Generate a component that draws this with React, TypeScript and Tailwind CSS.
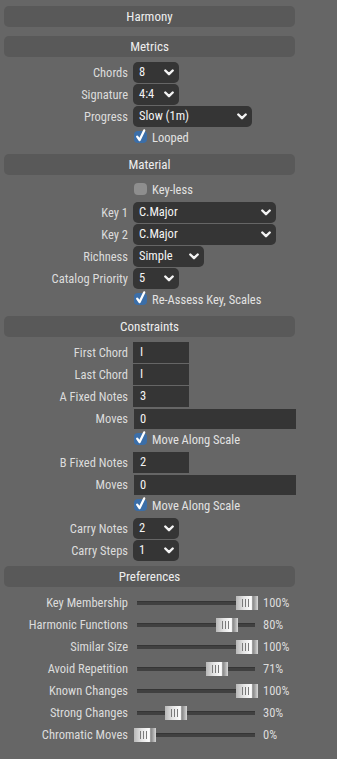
import React from "react";

const font = "font-['Roboto_Condensed',Roboto,sans-serif]";

function Header({ title }: { title: string }) {
  return (
    <div className="h-[21px] rounded-[5px] bg-[#595959] flex items-center justify-center text-[13px] text-[#eeeeee]">
      {title}
    </div>
  );
}

function Chevron() {
  return (
    <svg width="10" height="7" viewBox="0 0 10 7" className="shrink-0">
      <polyline points="1.3,1.5 5,5.2 8.7,1.5" fill="none" stroke="#f4f4f4" strokeWidth="2.4" strokeLinecap="round" strokeLinejoin="round" />
    </svg>
  );
}

function Select({ value, w }: { value: string; w: string }) {
  return (
    <div className={`${w} h-[21px] rounded-[5px] bg-[#353535] flex items-center justify-between pl-[6px] pr-[5px] text-[#f4f4f4]`}>
      <span>{value}</span>
      <Chevron />
    </div>
  );
}

function Input({ value, wide }: { value: string; wide?: boolean }) {
  return wide ? (
    <div className="w-[162px] h-[20px] mt-[1px] ml-[1px] bg-[#353535] flex items-center pl-[6px] text-[#f4f4f4]">{value}</div>
  ) : (
    <div className="w-[56px] h-[21px] bg-[#353535] flex items-center pl-[7px] text-[#f4f4f4]">{value}</div>
  );
}

function Row({ label, children }: { label: string; children: React.ReactNode }) {
  return (
    <div className="flex h-[22px] items-start">
      <div className="w-[124px] shrink-0 text-right pr-0 h-[21px] leading-[21px] text-[#dcdcdc]">{label}</div>
      <div className="ml-[5px]">{children}</div>
    </div>
  );
}

function Check({ label, checked }: { label: string; checked: boolean }) {
  return (
    <div className="flex h-[22px] items-start pl-[130px] pt-[3px]">
      {checked ? (
        <div className="relative w-[13px] h-[12px] rounded-[4px] bg-[#3b6ea8]">
          <svg width="13" height="14" viewBox="0 0 13 14" className="absolute left-0 top-[-3px] overflow-visible">
            <polyline points="3.2,8.6 5.6,12 10.2,2.4" fill="none" stroke="#ffffff" strokeWidth="2.3" strokeLinecap="round" strokeLinejoin="round" />
          </svg>
        </div>
      ) : (
        <div className="w-[13px] h-[12px] rounded-[4px] bg-[#8e8e8e]" />
      )}
      <span className="ml-[5px] leading-[13px] text-[#e2e2e2]">{label}</span>
    </div>
  );
}

function Slider({ label, value }: { label: string; value: number }) {
  return (
    <div className="flex h-[22px] items-center">
      <div className="w-[124px] shrink-0 text-right text-[#dcdcdc]">{label}</div>
      <div className="relative ml-[6px] w-[124px] h-[14px] flex items-center">
        <div className="mx-[3px] flex-1 h-[4px] bg-[#404040] border-t border-[#353535]" />
        <div
          className="absolute top-0 w-[22px] h-[14px] flex items-center bg-[linear-gradient(to_right,#b8b8b8_0%,#e4e4e4_35%,#f7f7f7_62%,#ffffff_70%,#a0a0a0_74%,#8f8f8f_80%,#d8d8d8_100%)]"
          style={{ left: `${(value / 100) * 102}px` }}
        >
          <div className="ml-[6px] flex gap-[2px]">
            <div className="w-px h-[8px] bg-[#7a7a7a]" />
            <div className="w-px h-[8px] bg-[#7a7a7a]" />
            <div className="w-px h-[8px] bg-[#7a7a7a]" />
          </div>
        </div>
      </div>
      <div className="ml-[5px] text-[#dcdcdc]">{value}%</div>
    </div>
  );
}

export default function App() {
  return (
    <div className={`${font} bg-[#666666] min-h-[759px] text-[12.5px] pt-[6px] pl-[4px]`}>
      <div className="w-[291px] flex flex-col">
        <Header title="Harmony" />
        <div className="h-[9px]" />
        <Header title="Metrics" />
        <div className="pt-[5px] pb-[4px]">
          <Row label="Chords"><Select value="8" w="w-[46px]" /></Row>
          <Row label="Signature"><Select value="4:4" w="w-[46px]" /></Row>
          <Row label="Progress"><Select value="Slow (1m)" w="w-[119px]" /></Row>
          <Check label="Looped" checked />
        </div>
        <Header title="Material" />
        <div className="pt-[5px] pb-[4px]">
          <Check label="Key-less" checked={false} />
          <Row label="Key 1"><Select value="C.Major" w="w-[143px]" /></Row>
          <Row label="Key 2"><Select value="C.Major" w="w-[143px]" /></Row>
          <Row label="Richness"><Select value="Simple" w="w-[71px]" /></Row>
          <Row label="Catalog Priority"><Select value="5" w="w-[46px]" /></Row>
          <Check label="Re-Assess Key, Scales" checked />
        </div>
        <Header title="Constraints" />
        <div className="pt-[5px] pb-[4px]">
          <Row label="First Chord"><Input value="I" /></Row>
          <Row label="Last Chord"><Input value="I" /></Row>
          <Row label="A Fixed Notes"><Input value="3" /></Row>
          <Row label="Moves"><Input value="0" wide /></Row>
          <Check label="Move Along Scale" checked />
          <Row label="B Fixed Notes"><Input value="2" /></Row>
          <Row label="Moves"><Input value="0" wide /></Row>
          <Check label="Move Along Scale" checked />
          <Row label="Carry Notes"><Select value="2" w="w-[46px]" /></Row>
          <Row label="Carry Steps"><Select value="1" w="w-[46px]" /></Row>
        </div>
        <Header title="Preferences" />
        <div className="pt-[5px]">
          <Slider label="Key Membership" value={100} />
          <Slider label="Harmonic Functions" value={80} />
          <Slider label="Similar Size" value={100} />
          <Slider label="Avoid Repetition" value={71} />
          <Slider label="Known Changes" value={100} />
          <Slider label="Strong Changes" value={30} />
          <Slider label="Chromatic Moves" value={0} />
        </div>
      </div>
    </div>
  );
}
